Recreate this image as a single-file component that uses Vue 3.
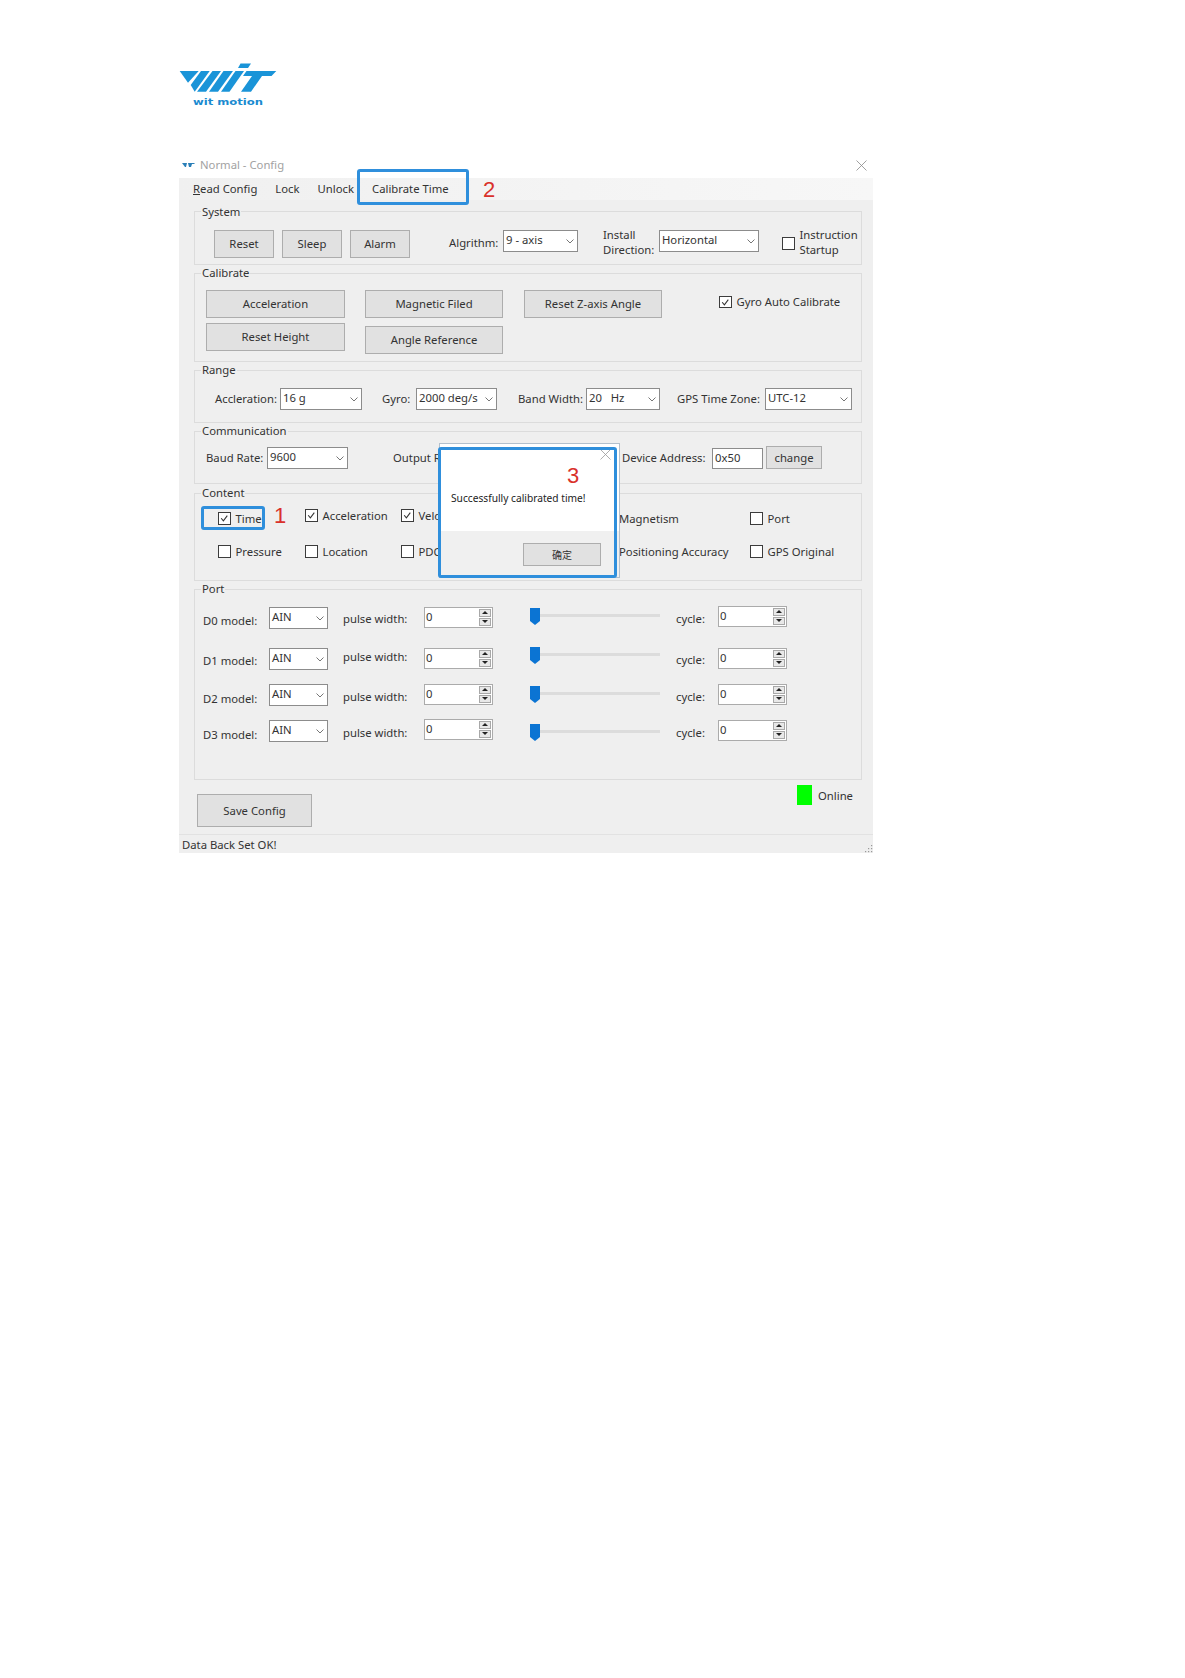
<script setup>
const portRows = [
  { name: 'D0 model:', h: 41, label: 6, pulse: 4, spinA: 0, thumb: 1, cycle: 4, spinB: -1 },
  { name: 'D1 model:', h: 36, label: 5, pulse: 1, spinA: 0, thumb: -1, cycle: 4, spinB: 0 },
  { name: 'D2 model:', h: 36, label: 7, pulse: 5, spinA: 0, thumb: 2, cycle: 5, spinB: 0 },
  { name: 'D3 model:', h: 36, label: 7, pulse: 5, spinA: -1, thumb: 4, cycle: 5, spinB: 0 }
]
const mt = (v) => ({ marginTop: v + 'px' })
</script>

<template>
  <div class="page">
    <svg class="logo" viewBox="0 0 105 52" width="105" height="52">
      <g fill="#1a94d8">
        <polygon points="4.7,13 23.7,13 13,24.7" />
        <polygon points="26,13 34.7,13 19.7,33.7 15.7,27" />
        <polygon points="37.5,13 46,13 31,33.7 22,33.7" />
        <polygon points="48.5,13 58,13 43,33.7 34,33.7" />
        <polygon points="60.5,13 69,13 54.5,33.7 46,33.7" />
        <polygon points="63,10 65.5,5.5 76,5.5 73,10" />
        <polygon points="71.5,13 101.3,13 96.5,18 87,18 76,33.7 66,33.7 77,18 68,18" />
      </g>
      <text class="logo-sub" x="18" y="47" textLength="70" lengthAdjust="spacingAndGlyphs">wit motion</text>
    </svg>

    <div class="window">
      <div class="title">
        <svg class="title-ico" viewBox="0 0 14 8" width="14" height="8">
          <polygon points="0,2 5,2 4,6 3,6" fill="#2a7fb8" />
          <polygon points="6,2 13,2 12,3 10,3 9,6 7,6" fill="#2a7fb8" />
        </svg>
        <span>Normal - Config</span>
        <svg class="title-x" viewBox="0 0 11 11" width="11" height="11">
          <path d="M.5.5l10 10M10.5.5l-10 10" stroke="#888" fill="none" stroke-width=".8" />
        </svg>
      </div>

      <div class="menu">
        <span class="m-read"><u>R</u>ead Config</span>
        <span class="m-lock">Lock</span>
        <span class="m-unlock">Unlock</span>
        <span class="m-cal">Calibrate Time</span>
      </div>

      <div class="body">
        <section class="group g-system">
          <span class="legend legend-first">System</span>
          <div class="row">
            <button class="btn b60">Reset</button>
            <button class="btn b60 ml8">Sleep</button>
            <button class="btn b60 ml8">Alarm</button>
            <label class="lbl algr">Algrithm:</label>
            <div class="select s75"><span>9 - axis</span><svg class="chev" viewBox="0 0 8 5" width="8" height="5"><path d="M.5.5L4 4 7.5.5" /></svg></div>
            <label class="lbl install">Install<br />Direction:</label>
            <div class="select s100"><span>Horizontal</span><svg class="chev" viewBox="0 0 8 5" width="8" height="5"><path d="M.5.5L4 4 7.5.5" /></svg></div>
            <span class="cb instr-cb"></span>
            <label class="lbl instr">Instruction<br />Startup</label>
          </div>
        </section>

        <section class="group g-calibrate">
          <span class="legend">Calibrate</span>
          <div class="row cal-row">
            <div class="cal-col col-a">
              <button class="btn wide">Acceleration</button>
              <button class="btn wide">Reset Height</button>
            </div>
            <div class="cal-col col-b">
              <button class="btn wide2">Magnetic Filed</button>
              <button class="btn wide2">Angle Reference</button>
            </div>
            <button class="btn wide2 col-c">Reset Z-axis Angle</button>
            <div class="check gyro"><span class="cb on"><svg viewBox="0 0 12 12"><path d="M2.5 6l2.5 3 4.5-6" /></svg></span><span>Gyro Auto Calibrate</span></div>
          </div>
        </section>

        <section class="group g-range">
          <span class="legend">Range</span>
          <div class="row range-row">
            <label class="lbl w65">Accleration:</label>
            <div class="select s82"><span>16 g</span><svg class="chev" viewBox="0 0 8 5" width="8" height="5"><path d="M.5.5L4 4 7.5.5" /></svg></div>
            <label class="lbl w34 ml20">Gyro:</label>
            <div class="select s81"><span>2000 deg/s</span><svg class="chev" viewBox="0 0 8 5" width="8" height="5"><path d="M.5.5L4 4 7.5.5" /></svg></div>
            <label class="lbl w68 ml21">Band Width:</label>
            <div class="select s74"><span>20&nbsp;&nbsp;&nbsp;Hz</span><svg class="chev" viewBox="0 0 8 5" width="8" height="5"><path d="M.5.5L4 4 7.5.5" /></svg></div>
            <label class="lbl w88 ml17">GPS Time Zone:</label>
            <div class="select s88"><span>UTC-12</span><svg class="chev" viewBox="0 0 8 5" width="8" height="5"><path d="M.5.5L4 4 7.5.5" /></svg></div>
          </div>
        </section>

        <section class="group g-comm">
          <span class="legend">Communication</span>
          <div class="row comm-row">
            <label class="lbl w61">Baud Rate:</label>
            <div class="select s81"><span>9600</span><svg class="chev" viewBox="0 0 8 5" width="8" height="5"><path d="M.5.5L4 4 7.5.5" /></svg></div>
            <label class="lbl output">Output R</label>
            <label class="lbl w90">Device Address:</label>
            <div class="input addr">0x50</div>
            <button class="btn change">change</button>
          </div>
        </section>

        <section class="group g-content">
          <span class="legend">Content</span>
          <div class="content-grid">
            <div class="check"><span class="cb on"><svg viewBox="0 0 12 12"><path d="M2.5 6l2.5 3 4.5-6" /></svg></span><span>Time</span></div>
            <div class="check up"><span class="cb on"><svg viewBox="0 0 12 12"><path d="M2.5 6l2.5 3 4.5-6" /></svg></span><span>Acceleration</span></div>
            <div class="check up"><span class="cb on"><svg viewBox="0 0 12 12"><path d="M2.5 6l2.5 3 4.5-6" /></svg></span><span>Velo</span></div>
            <div class="check"><span>Magnetism</span></div>
            <div class="check"><span class="cb"></span><span>Port</span></div>
            <div class="check"><span class="cb"></span><span>Pressure</span></div>
            <div class="check"><span class="cb"></span><span>Location</span></div>
            <div class="check"><span class="cb"></span><span>PDO</span></div>
            <div class="check"><span>Positioning Accuracy</span></div>
            <div class="check"><span class="cb"></span><span>GPS Original</span></div>
          </div>
        </section>

        <section class="group g-port">
          <span class="legend">Port</span>
          <div v-for="r in portRows" :key="r.name" class="port-row" :style="{ height: r.h + 'px' }">
            <label class="lbl p-name" :style="mt(r.label)">{{ r.name }}</label>
            <div class="select s59"><span>AIN</span><svg class="chev" viewBox="0 0 8 5" width="8" height="5"><path d="M.5.5L4 4 7.5.5" /></svg></div>
            <label class="lbl p-pulse" :style="mt(r.pulse)">pulse width:</label>
            <div class="spin" :style="mt(r.spinA)">
              <span>0</span>
              <div class="spin-btns"><i class="up-a"></i><i class="dn-a"></i></div>
            </div>
            <div class="slider" :style="mt(r.thumb)">
              <svg viewBox="0 0 10 17" width="10" height="17"><path d="M0 0h10v13l-5 4-5-4z" fill="#0b74d3" /></svg>
              <div class="track"></div>
            </div>
            <label class="lbl p-cycle" :style="mt(r.cycle)">cycle:</label>
            <div class="spin" :style="mt(r.spinB)">
              <span>0</span>
              <div class="spin-btns"><i class="up-a"></i><i class="dn-a"></i></div>
            </div>
          </div>
        </section>

        <div class="bottom">
          <button class="btn save">Save Config</button>
          <div class="online"><span class="led"></span><span class="online-t">Online</span></div>
        </div>
      </div>

      <div class="status">
        <span>Data Back Set OK!</span>
        <svg class="grip" viewBox="0 0 8 8" width="8" height="8"><g fill="#999"><rect x="6" y="0" width="1.2" height="1.2" /><rect x="3" y="3" width="1.2" height="1.2" /><rect x="6" y="3" width="1.2" height="1.2" /><rect x="0" y="6" width="1.2" height="1.2" /><rect x="3" y="6" width="1.2" height="1.2" /><rect x="6" y="6" width="1.2" height="1.2" /></g></svg>
      </div>

      <div class="mark mark-cal"></div>
      <div class="mark mark-time"></div>
      <span class="num num-2">2</span>
      <span class="num num-1">1</span>

      <div class="dialog">
        <div class="dlg-main">
          <svg class="dlg-x" viewBox="0 0 11 11" width="11" height="11"><path d="M.5.5l10 10M10.5.5l-10 10" stroke="#999" fill="none" stroke-width=".8" /></svg>
          <span class="num num-3">3</span>
          <p class="dlg-text">Successfully calibrated time!</p>
        </div>
        <div class="dlg-foot"><button class="btn ok">确定</button></div>
        <div class="mark mark-dlg"></div>
      </div>
    </div>
  </div>
</template>

<style>
html, body { margin: 0; background: #fff; }
</style>

<style scoped>
.page {
  min-height: 1678px;
  box-sizing: border-box;
  padding: 58px 0 0 175px;
  font: 11.3px/16px "Noto Sans", "Noto Sans CJK SC", sans-serif;
  color: #333;
}
.logo { display: block; }
.logo-sub { font: 700 9.5px "DejaVu Sans", sans-serif; fill: #1a8ad0; }
.window { position: relative; width: 694px; margin: 45px 0 0 4px; }
.title { height: 23px; box-sizing: border-box; padding-bottom: 3px; display: flex; align-items: center; color: #a2a2a2; }
.title-ico { margin: 0 4px 0 3px; }
.title-x { margin-left: auto; margin-right: 6px; }
.menu {
  height: 22px; display: flex; align-items: center;
  background: linear-gradient(90deg, #f0f0f0, #f7f7f7);
}
.m-read { margin-left: 14px; }
.m-lock { margin-left: 18px; }
.m-unlock { margin-left: 18px; }
.m-cal { margin-left: 18px; }
.body { background: #efefef; padding: 11px 11px 0 15px; height: 634px; box-sizing: border-box; }
.group { position: relative; border: 1px solid #dcdcdc; box-sizing: border-box; margin-bottom: 8px; }
.legend { position: absolute; top: -9px; left: 6px; padding: 0 1px; background: #efefef; }
.legend-first { top: -8px; }
.g-system { height: 54px; }
.g-calibrate { height: 89px; }
.g-range { height: 53px; }
.g-comm { height: 53px; margin-bottom: 9px; }
.g-content { height: 88px; }
.g-port { height: 191px; padding-top: 17px; margin-bottom: 0; }
.row { display: flex; align-items: flex-start; }
.g-system .row { padding: 18px 0 0 19px; }
.cal-row { padding: 16px 0 0 11px; }
.range-row { padding: 17px 0 0 20px; }
.comm-row { padding: 15px 0 0 11px; }

.btn {
  display: block; box-sizing: border-box; height: 28px; padding: 0;
  font: inherit; color: #333; background: #e1e1e1; border: 1px solid #adadad;
}
.b60 { width: 60px; }
.ml8 { margin-left: 8px; }
.wide { width: 139px; }
.wide2 { width: 138px; }
.cal-col { display: flex; flex-direction: column; }
.col-a { gap: 5px; }
.col-b { gap: 8px; margin-left: 20px; }
.col-c { margin-left: 21px; }
.lbl { display: block; white-space: nowrap; line-height: 16px; }
.algr { margin: 5px 0 0 39px; width: 54px; }
.install { margin: -3px 0 0 25px; width: 56px; line-height: 15px; }
.instr { margin: -3px 0 0 5px; line-height: 15px; }
.instr-cb { margin: 7px 0 0 23px; }
.w65 { width: 65px; margin-top: 3px; }
.w34 { width: 34px; margin-top: 3px; }
.w68 { width: 68px; margin-top: 3px; }
.w88 { width: 88px; margin-top: 3px; }
.w61 { width: 61px; margin-top: 3px; }
.w90 { width: 90px; margin-top: 3px; }
.output { width: 229px; margin: 3px 0 0 45px; }
.ml20 { margin-left: 20px; }
.ml21 { margin-left: 21px; }
.ml17 { margin-left: 17px; }

.select {
  position: relative; box-sizing: border-box; height: 22px; padding-left: 2px;
  background: #fff; border: 1px solid #8c8c8c; line-height: 18px; white-space: nowrap;
}
.chev { position: absolute; right: 3px; top: 8px; fill: none; stroke: #666; stroke-width: .9; }
.s75 { width: 75px; }
.s100 { width: 100px; }
.s82 { width: 82px; }
.s81 { width: 81px; }
.s74 { width: 74px; }
.s88 { width: 87px; }
.s59 { width: 59px; }
.input { box-sizing: border-box; background: #fff; border: 1px solid #8c8c8c; padding-left: 2px; line-height: 18px; }
.addr { width: 51px; height: 21px; margin-top: 1px; }
.change { width: 56px; height: 23px; margin: -1px 0 0 3px; }

.cb {
  display: inline-block; box-sizing: border-box; width: 12.5px; height: 12.5px; flex: none;
  background: #fff; border: 1px solid #3c3c3c;
}
.cb svg { display: block; width: 10.5px; height: 10.5px; fill: none; stroke: #333; stroke-width: 1.2; }
.check { display: flex; align-items: center; gap: 5px; white-space: nowrap; }
.gyro { margin: 4px 0 0 57px; }
.content-grid {
  display: grid;
  grid-template-columns: 87px 96px 218px 131px 1fr;
  grid-template-rows: 33px 33px;
  padding: 8px 0 0 23px;
}
.up { margin-bottom: 6px; }

.port-row { display: flex; align-items: flex-start; padding-left: 8px; }
.p-name { width: 66px; }
.p-pulse { width: 81px; margin-left: 15px; }
.p-cycle { width: 42px; margin-left: 16px; }
.spin {
  position: relative; box-sizing: border-box; width: 69px; height: 21px; padding-left: 1px;
  background: #fff; border: 1px solid #ababab; line-height: 17px;
}
.spin-btns {
  position: absolute; right: 1px; top: 1px; width: 12px; height: 17px;
  display: flex; flex-direction: column; gap: 1px;
}
.spin-btns i {
  position: relative; flex: 1; background: #e8e8e8; border: 1px solid #a8a8a8; box-sizing: border-box;
}
.spin-btns i::after {
  content: ""; position: absolute; left: 2px; top: 1px; border: 3px solid transparent;
  border-top: 0; border-bottom: 3px solid #222;
}
.spin-btns .dn-a::after { border-bottom: 0; border-top: 3px solid #222; }
.slider { display: flex; align-items: flex-start; width: 130px; margin-left: 37px; }
.slider svg { display: block; flex: none; }
.track { flex: 1; height: 3px; margin-top: 6px; background: #dcdcdc; }

.bottom { display: flex; align-items: flex-start; }
.save { width: 115px; height: 33px; margin: 14px 0 0 3px; }
.online { display: flex; align-items: center; gap: 6px; margin: 5px 0 0 485px; }
.online-t { margin-top: 2px; }
.led { width: 15px; height: 20px; background: #0f0; }

.status {
  position: relative; height: 19px; box-sizing: border-box; padding: 1px 0 0 3px;
  display: flex; align-items: center; background: #efefef; border-top: 1px solid #e2e2e2;
}
.grip { position: absolute; right: 0; bottom: 0; }

.mark { position: absolute; box-sizing: border-box; border: 3px solid #2f8fdc; border-radius: 3px; pointer-events: none; }
.mark-cal { left: 178px; top: 14px; width: 112px; height: 36px; }
.mark-time { left: 22px; top: 351px; width: 64px; height: 24px; }
.num { position: absolute; font: 22px/22px "Liberation Sans", sans-serif; color: #d9312b; }
.num-2 { left: 304px; top: 24px; }
.num-1 { left: 95px; top: 350px; }
.num-3 { left: 127px; top: 21px; }

.dialog {
  position: absolute; left: 260px; top: 288px; width: 181px; height: 135px; box-sizing: border-box;
  background: #f0f0f0; border: 1px solid #b4c0cc;
}
.dlg-main { position: relative; height: 87px; background: #fff; overflow: hidden; }
.dlg-x { position: absolute; right: 8px; top: 5px; }
.dlg-text { margin: 0; padding: 46px 0 0 11px; font-size: 10.2px; line-height: 16px; white-space: nowrap; color: #222; }
.dlg-foot { display: flex; justify-content: flex-end; padding: 12px 18px 0 0; }
.ok { width: 78px; height: 23px; font-size: 10px; }
.mark-dlg { left: -2px; top: 3px; width: 179px; height: 131px; }
</style>
